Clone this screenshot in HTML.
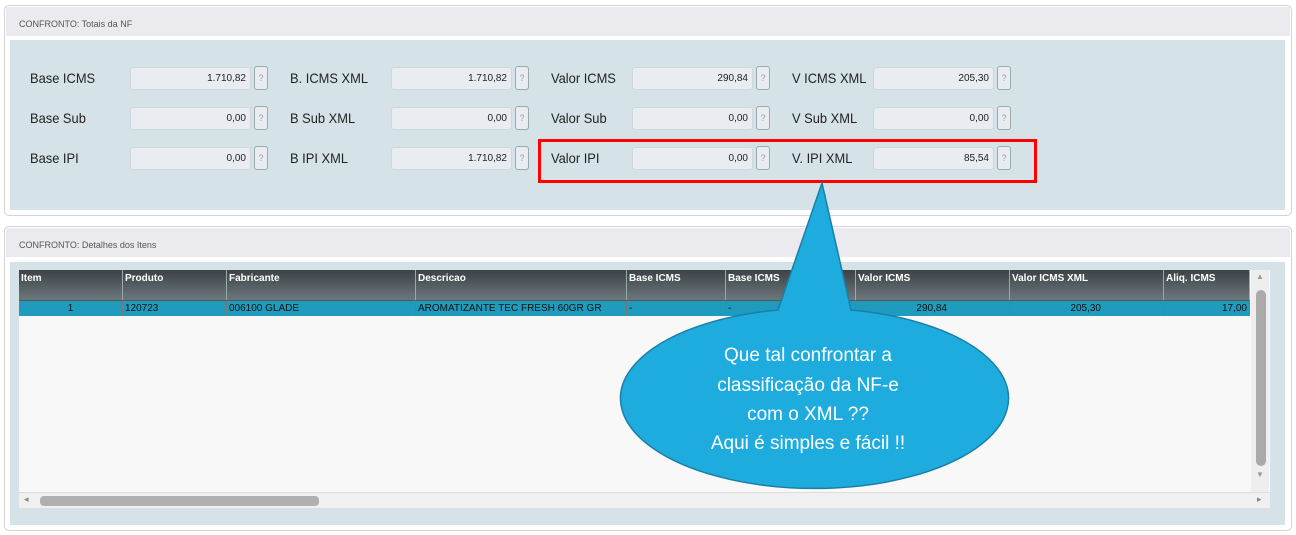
<!DOCTYPE html>
<html><head><meta charset="utf-8"><style>
*{margin:0;padding:0;box-sizing:border-box}
body{width:1296px;height:535px;background:#fff;position:relative;overflow:hidden;font-family:"Liberation Sans",Arial,sans-serif}
.abs{position:absolute}
.panel{position:absolute;left:4px;width:1288px;border:1px solid #d4d4d8;border-radius:5px;background:#fff}
.hdr{position:absolute;left:1px;right:1px;top:1px;height:29px;background:#ebebef;font-size:9px;color:#555;padding:12px 0 0 13px}
.inner{position:absolute;background:#d5e2e8}
.lbl{position:absolute;font-size:14px;color:#222;transform:scaleX(0.92);transform-origin:left}
.inp{position:absolute;width:121px;height:23px;background:#e9ecf0;border:1px solid #cfd6dc;border-radius:3px;font-size:10px;color:#222;text-align:right;padding:5px 4px 0 0}
.q{position:absolute;width:14px;height:24px;border:1px solid #9aa;border-radius:3px;background:#e9ecf0;font-size:9px;color:#999;text-align:center;padding-top:6px}
.th{position:absolute;top:270px;height:30px;background:linear-gradient(#3c4245,#6c777c);color:#fff;font-size:10px;font-weight:bold;padding:3px 0 0 2px;border-right:1px solid #9aa}
.td{position:absolute;top:300px;height:16px;background:#1e9bbd;color:#111;font-size:10px;padding:2px 2px 0 2px;border-right:1px solid #777;border-top:1px solid #555}
</style></head><body>
<div class="panel" style="top:5px;height:211px">
<div class="hdr">CONFRONTO: Totais da NF</div>
</div>
<div class="inner" style="left:10px;top:40px;width:1275px;height:170px"></div>

<div class="lbl" style="left:30px;top:70px">Base ICMS</div>
<div class="lbl" style="left:30px;top:110px">Base Sub</div>
<div class="lbl" style="left:30px;top:150px">Base IPI</div>
<div class="lbl" style="left:290px;top:70px">B. ICMS XML</div>
<div class="lbl" style="left:290px;top:110px">B Sub XML</div>
<div class="lbl" style="left:290px;top:150px">B IPI XML</div>
<div class="lbl" style="left:551px;top:70px">Valor ICMS</div>
<div class="lbl" style="left:551px;top:110px">Valor Sub</div>
<div class="lbl" style="left:551px;top:150px">Valor IPI</div>
<div class="lbl" style="left:792px;top:70px">V ICMS XML</div>
<div class="lbl" style="left:792px;top:110px">V Sub XML</div>
<div class="lbl" style="left:792px;top:150px">V. IPI XML</div>

<div class="inp" style="left:130px;top:67px">1.710,82</div><div class="q" style="left:254px;top:66px">?</div>
<div class="inp" style="left:130px;top:107px">0,00</div><div class="q" style="left:254px;top:106px">?</div>
<div class="inp" style="left:130px;top:147px">0,00</div><div class="q" style="left:254px;top:146px">?</div>
<div class="inp" style="left:391px;top:67px">1.710,82</div><div class="q" style="left:515px;top:66px">?</div>
<div class="inp" style="left:391px;top:107px">0,00</div><div class="q" style="left:515px;top:106px">?</div>
<div class="inp" style="left:391px;top:147px">1.710,82</div><div class="q" style="left:515px;top:146px">?</div>
<div class="inp" style="left:632px;top:67px">290,84</div><div class="q" style="left:756px;top:66px">?</div>
<div class="inp" style="left:632px;top:107px">0,00</div><div class="q" style="left:756px;top:106px">?</div>
<div class="inp" style="left:632px;top:147px">0,00</div><div class="q" style="left:756px;top:146px">?</div>
<div class="inp" style="left:873px;top:67px">205,30</div><div class="q" style="left:997px;top:66px">?</div>
<div class="inp" style="left:873px;top:107px">0,00</div><div class="q" style="left:997px;top:106px">?</div>
<div class="inp" style="left:873px;top:147px">85,54</div><div class="q" style="left:997px;top:146px">?</div>

<div class="abs" style="left:538px;top:139px;width:499px;height:44px;border:3px solid #f00"></div>

<div class="panel" style="top:226px;height:305px">
<div class="hdr">CONFRONTO: Detalhes dos Itens</div>
</div>
<div class="inner" style="left:10px;top:262px;width:1275px;height:263px"></div>
<div class="abs" style="left:19px;top:270px;width:1251px;height:223px;background:#f8f8f8"></div>

<div class="th" style="left:19px;width:104px">Item</div>
<div class="th" style="left:123px;width:104px">Produto</div>
<div class="th" style="left:227px;width:189px">Fabricante</div>
<div class="th" style="left:416px;width:211px">Descricao</div>
<div class="th" style="left:627px;width:99px">Base ICMS</div>
<div class="th" style="left:726px;width:130px">Base ICMS</div>
<div class="th" style="left:856px;width:154px">Valor ICMS</div>
<div class="th" style="left:1010px;width:154px">Valor ICMS XML</div>
<div class="th" style="left:1164px;width:86px">Aliq. ICMS</div>
<div class="td" style="left:19px;width:104px;text-align:center">1</div>
<div class="td" style="left:123px;width:104px">120723</div>
<div class="td" style="left:227px;width:189px">006100 GLADE</div>
<div class="td" style="left:416px;width:211px">AROMATIZANTE TEC FRESH 60GR GR</div>
<div class="td" style="left:627px;width:99px">-</div>
<div class="td" style="left:726px;width:130px">-</div>
<div class="td" style="left:856px;width:154px;text-align:right;padding-right:62px">290,84</div>
<div class="td" style="left:1010px;width:154px;text-align:right;padding-right:62px">205,30</div>
<div class="td" style="left:1164px;width:86px;text-align:right">17,00</div>

<div class="abs" style="left:1251px;top:270px;width:18px;height:222px;background:#eee"></div>
<div class="abs" style="left:1256px;top:290px;width:10px;height:176px;background:#aaa;border-radius:5px"></div>
<div class="abs" style="left:1256px;top:272px;font-size:8px;color:#999">▲</div>
<div class="abs" style="left:1256px;top:470px;font-size:8px;color:#999">▼</div>
<div class="abs" style="left:19px;top:492px;width:1251px;height:17px;background:#f0f0f0;border-top:1px solid #ddd;border-bottom:1px solid #ddd"></div>
<div class="abs" style="left:40px;top:496px;width:279px;height:10px;background:#b0b0b0;border-radius:4px"></div>
<div class="abs" style="left:24px;top:494px;font-size:9px;color:#888">◂</div>
<div class="abs" style="left:1257px;top:494px;font-size:9px;color:#888">▸</div>

<svg class="abs" style="left:0;top:0" width="1296" height="535">
<path d="M822 183 L851 310 A194 90 0 1 1 778 310 Z" fill="#1eacdf" stroke="#1a7fa8" stroke-width="1.5"/>
<g fill="#fff" font-family="'Liberation Sans',sans-serif" font-size="19" text-anchor="middle">
<text x="808" y="361">Que tal confrontar a</text>
<text x="808" y="391">classificação da NF-e</text>
<text x="808" y="420">com o XML ??</text>
<text x="808" y="449">Aqui é simples e fácil !!</text>
</g>
</svg>
</body></html>
